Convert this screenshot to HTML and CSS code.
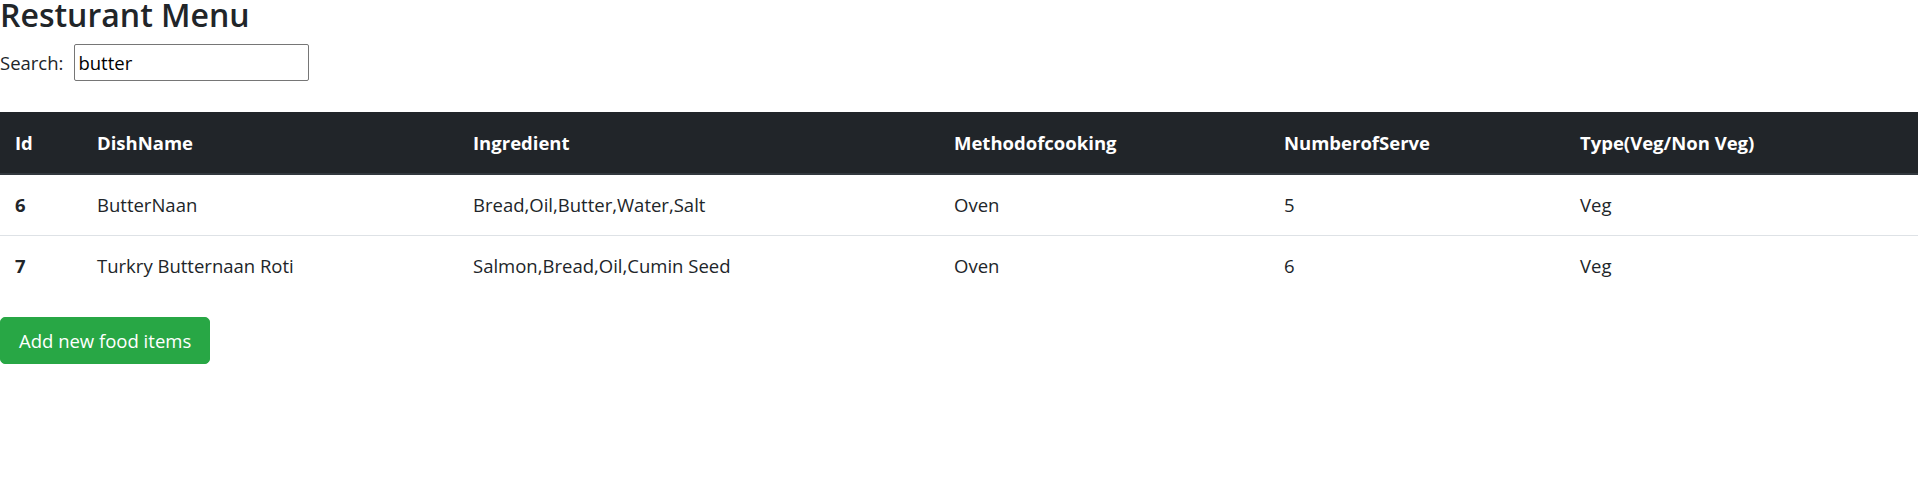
FILE: index.html
```html
<!DOCTYPE html>
<html lang="en">
<head>
<meta charset="utf-8">
<title>Resturant Menu</title>
<link rel="stylesheet" href="styles.css">
</head>
<body>
<div class="page">
  <h2 class="title">Resturant Menu</h2>
  <div class="search">
    <label class="search-label" for="q">Search:</label>
    <input class="search-input" id="q" type="text" value="butter">
  </div>
  <table class="menu">
    <colgroup>
      <col class="c-id"><col class="c-name"><col class="c-ing"><col class="c-method"><col class="c-serve"><col class="c-type">
    </colgroup>
    <thead>
      <tr>
        <th>Id</th>
        <th>DishName</th>
        <th>Ingredient</th>
        <th>Methodofcooking</th>
        <th>NumberofServe</th>
        <th>Type(Veg/Non Veg)</th>
      </tr>
    </thead>
    <tbody>
      <tr>
        <th>6</th>
        <td>ButterNaan</td>
        <td>Bread,Oil,Butter,Water,Salt</td>
        <td>Oven</td>
        <td>5</td>
        <td>Veg</td>
      </tr>
      <tr>
        <th>7</th>
        <td>Turkry Butternaan Roti</td>
        <td>Salmon,Bread,Oil,Cumin Seed</td>
        <td>Oven</td>
        <td>6</td>
        <td>Veg</td>
      </tr>
    </tbody>
  </table>
  <button class="btn-add" type="button">Add new food items</button>
</div>
</body>
</html>
```

FILE: styles.css
```css
html, body {
  margin: 0;
  padding: 0;
  background: #fff;
}

.page {
  font-family: "Open Sans", "Noto Sans", "Liberation Sans", sans-serif;
  font-size: 18.5px;
  color: #212529;
  line-height: 30px;
}

.title {
  margin: 0;
  font-size: 32px;
  font-weight: 600;
  line-height: 30px;
  color: #212529;
}

.search {
  display: flex;
  align-items: center;
  gap: 11px;
  margin-top: 14px;
}

.search-label {
  font-size: 18.5px;
}

.search-input {
  box-sizing: border-box;
  width: 235px;
  height: 37px;
  border: 1px solid #767676;
  border-radius: 2px;
  padding: 0 3px;
  font-family: inherit;
  font-size: 18.5px;
  color: #000;
}

.menu {
  width: 100%;
  border-collapse: collapse;
  margin-top: 31px;
  margin-bottom: 21px;
}

.c-id { width: 82px; }
.c-name { width: 376px; }
.c-ing { width: 481px; }
.c-method { width: 330px; }
.c-serve { width: 296px; }

.menu th,
.menu td {
  text-align: left;
  vertical-align: top;
  padding: 15px;
  border-top: 1px solid #dee2e6;
}

.menu thead th {
  background: #212529;
  color: #fff;
  font-weight: 700;
  border-top: 1px solid #212529;
  border-bottom: 2px solid #32383e;
}

.menu tbody th {
  font-weight: 700;
}

.btn-add {
  display: block;
  height: 47px;
  padding: 0 18px;
  border: 1px solid #28a745;
  border-radius: 5px;
  background: #28a745;
  color: #fff;
  font-family: inherit;
  font-size: 18.5px;
  line-height: 30px;
}
```
